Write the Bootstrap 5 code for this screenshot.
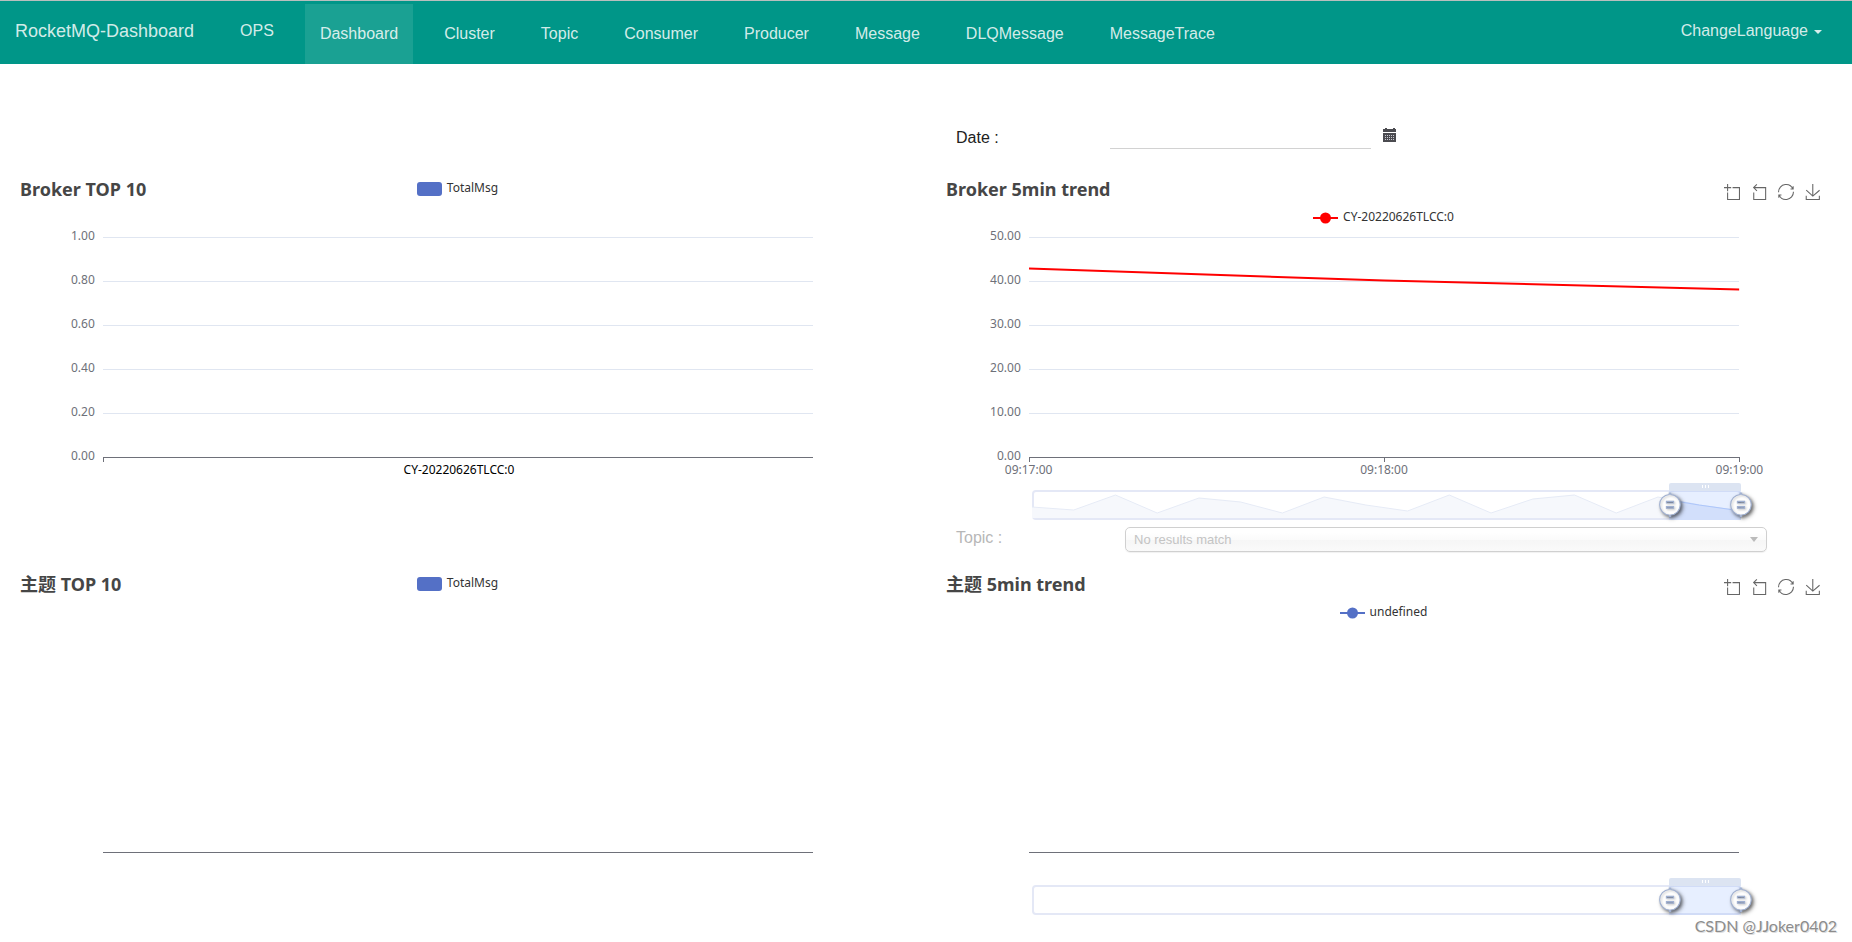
<!DOCTYPE html>
<html lang="en">
<head>
<meta charset="utf-8">
<meta name="viewport" content="width=device-width, initial-scale=1">
<title>RocketMQ-Dashboard</title>
<link href="https://cdn.jsdelivr.net/npm/bootstrap@5.3.0/dist/css/bootstrap.min.css" rel="stylesheet">
<style>
  body { font-family: "Liberation Sans", Arial, sans-serif; font-size: 16px; color: #212121; background: #fff; }
  a { text-decoration: none; }

  /* top bar */
  .topbar { background: #009688; border-top: 1px solid #b9bfbe; height: 64px; }
  .topbar a, .topbar button { color: rgba(255, 255, 255, .84); line-height: 24px; }
  .brand-link { font-size: 18px; padding: 0 15px 4px; }
  .menu { gap: 16px; margin: 0 0 0 16px; }
  .menu a { display: flex; align-items: center; height: 60px; padding: 0 15px; }
  .menu a.on { background: #1aa193; }
  .ops-link { padding-bottom: 7px !important; }
  .lang { background: none; border: 0; padding: 0 30px 4px 15px; }
  .lang::after { margin-left: 6px; border-width: 4px; border-bottom-width: 0; vertical-align: 2px; }

  /* form rows */
  .half { padding: 0 23px 0 15px; }
  .date-row { height: 113px; padding: 35px 0 0 15px; }
  .date-row label { width: 154px; }
  .topic-row { height: 45px; padding-left: 15px; color: #b7b7b7; }
  .topic-row label { width: 169px; line-height: 22px; }
  .date-input { width: 261px; height: 28px; border: 0; border-bottom: 1px solid #d2d2d2; background: none; padding: 0; margin-bottom: 6px; }
  .date-btn { border: 0; background: none; padding: 0; margin: 0 0 6px 12px; line-height: 0; }
  .pick { margin-right: 62px; position: relative; }
  .pick select { appearance: none; width: 100%; height: 25px; border: 1px solid #d0d0d0; border-radius: 5px; padding: 0 8px; font-size: 13px; color: #c4c4c4; opacity: 1; background: linear-gradient(#fff 20%, #fbfbfb 50%, #f6f6f6 52%, #fafafa); box-shadow: 0 1px 1px rgba(0, 0, 0, .06); }
  .pick::after { content: ""; position: absolute; right: 9px; top: 10px; border: 4px solid transparent; border-top: 5px solid #bbb; border-bottom: 0; }

  /* charts */
  .chart { height: 350px; font: 12px/16px "Noto Sans", "Noto Sans CJK SC", sans-serif; color: #333; }
  .chart-head { display: grid; grid-template-columns: 1fr auto 1fr; grid-template-rows: 28px 24px; height: 60px; padding: 0 8px 0 5px; }
  .chart-head h2 { font-size: 18px; line-height: 24px; font-weight: 700; color: #464646; margin: 0; }
  .legend { display: flex; gap: 5px; align-items: center; grid-column: 2; }
  .legend.top-line { height: 22px; }
  .legend.second { grid-row: 2; grid-column: 1 / 4; justify-self: center; }
  .legend svg { display: block; margin-top: 2px; }
  .tools { grid-column: 3; justify-self: end; display: flex; gap: 11px; padding-top: 7px; }
  .tools button { border: 0; background: none; padding: 0; width: 16px; height: 16px; line-height: 0; }
  .tools svg { width: 16px; height: 16px; fill: none; stroke: #666; stroke-width: 4; overflow: visible; }
  .plot { display: grid; grid-template-columns: calc(10% - 1px) 80%; height: 220px; }
  .ylab { display: flex; flex-direction: column; justify-content: space-between; text-align: right; height: 236px; margin-top: -9px; padding-right: 8px; color: #6e7079; }
  .area { grid-column: 2; width: 100%; height: 221px; overflow: visible; display: block; }
  .g { stroke: #e0e6f1; shape-rendering: crispEdges; }
  .ax { stroke: #6e7079; shape-rendering: crispEdges; }
  .xlab { height: 33px; margin: 0 10%; padding-top: 5px; display: flex; justify-content: space-between; color: #6e7079; }
  .xlab.wide { margin: 0 calc(10% - 23px) 0 calc(10% - 25px); }
  .xlab.single { justify-content: center; color: #000; }

  /* range slider below the trend charts */
  .zoomer { position: relative; height: 30px; margin: 0 calc(10% - 1px) 0 calc(10% + 2px); border: 2px solid #e4e8f6; border-radius: 4px; }
  .zoomer > svg { position: absolute; inset: -2px; width: calc(100% + 4px); height: 30px; }
  .window { position: absolute; left: 90%; right: -2px; top: -2px; height: 30px; background: rgba(135, 175, 255, .2); }
  .window::before { content: ""; position: absolute; left: 0; right: 0; top: -7px; height: 8px; border-radius: 2px 2px 0 0; background: #dce4f2; }
  .dots { position: absolute; left: calc(50% - 3px); top: -5px; width: 7px; height: 3px; background: repeating-linear-gradient(90deg, #fff 0 1px, transparent 1px 3px); }
  .grip { position: absolute; top: 2px; width: 24px; height: 26px; padding: 0; border: 0; background: none; line-height: 0; }
  .grip svg { width: 24px; height: 26px; overflow: visible; }
  .grip-fill { fill: #fff; filter: drop-shadow(2px 2px 2px rgba(0, 0, 0, .6)); }
  .grip-line { fill: none; stroke: #9fafd0; filter: drop-shadow(1px 1px 1px rgba(0, 0, 0, .25)); }
  .grip.from { left: -11px; }
  .grip.to { right: -12px; }

  .credit { position: absolute; right: 15px; bottom: 2px; font: 16px/20px Lato, sans-serif; color: #8c8c8c; text-shadow: -1px -1px 0 #fff, 1px 1px 0 #ddd; }
</style>
</head>
<body class="position-relative">
<svg width="0" height="0" class="position-absolute" aria-hidden="true">
  <defs>
    <path id="i-zoom" d="M0,13.5h26.9 M13.5,26.9V0 M32.1,13.5H58V58H13.5 V32.1"/>
    <path id="i-back" d="M22,1.4L9.9,13.5l12.3,12.3 M10.3,13.5H54.9v44.6 H10.3v-26"/>
    <path id="i-restore" d="M47,18.9h9.8V8.7 M56.3,20.1 C52.1,9,40.5,0.6,26.8,2.1C12.6,3.7,1.6,16.2,2.1,30.6 M13,41.1H3.1v10.2 M3.7,39.9c4.2,11.1,15.8,19.5,29.5,18 c14.2-1.6,25.2-14.1,24.7-28.5"/>
    <path id="i-save" d="M4.7,22.9L29.3,45.5L54.7,23.4M4.6,43.6L4.6,58L53.8,58L53.8,43.6M29.2,45.1L29.2,0"/>
    <path id="i-grip" d="M10.7,11.9v-1.3H9.3v1.3c-4.9,0.3-8.8,4.4-8.8,9.4c0,5,3.9,9.1,8.8,9.4v1.3h1.3v-1.3c4.9-0.3,8.8-4.4,8.8-9.4C19.5,16.3,15.6,12.2,10.7,11.9z M13.3,24.4H6.7V23h6.6V24.4z M13.3,19.6H6.7v-1.4h6.6V19.6z"/>
  </defs>
</svg>

<nav class="topbar d-flex align-items-center">
  <a class="brand-link" href="#">RocketMQ-Dashboard</a>
  <ul class="menu list-unstyled d-flex align-self-end">
    <li><a class="ops-link" href="#">OPS</a></li>
    <li><a class="on" href="#" aria-current="page">Dashboard</a></li>
    <li><a href="#">Cluster</a></li>
    <li><a href="#">Topic</a></li>
    <li><a href="#">Consumer</a></li>
    <li><a href="#">Producer</a></li>
    <li><a href="#">Message</a></li>
    <li><a href="#">DLQMessage</a></li>
    <li><a href="#">MessageTrace</a></li>
  </ul>
  <button class="lang dropdown-toggle ms-auto" type="button">ChangeLanguage</button>
</nav>

<main class="container-fluid p-0">
  <div class="row g-0">
    <div class="col-6 offset-6 half">
      <div class="date-row d-flex align-items-center">
        <label for="date">Date :</label>
        <input id="date" class="date-input" type="text">
        <button class="date-btn" type="button" aria-label="Pick a date">
          <svg width="14" height="14" viewBox="0 0 14 14" shape-rendering="crispEdges"><path fill="#4b4b50" d="M0 1h2V0h2v1h6V0h2v1h1v3H0zM0 5h13v9H0z"/><path stroke="#c9c9d2" stroke-dasharray="1 1" d="M2 7.500h10M2 9.500h10M2 11.500h10"/></svg>
        </button>
      </div>
    </div>
  </div>

  <div class="row g-0">
    <section class="col-6 half">
      <div class="chart">
        <div class="chart-head">
          <h2>Broker TOP 10</h2>
          <div class="legend top-line"><svg width="25" height="14"><rect width="25" height="14" rx="3" fill="#5470c6"/></svg>TotalMsg</div>
        </div>
        <div class="plot">
          <div class="ylab"><span>1.00</span><span>0.80</span><span>0.60</span><span>0.40</span><span>0.20</span><span>0.00</span></div>
          <svg class="area">
            <path class="ax" d="M.5 220v5"/>
            <line class="g" x2="100%" y1=".5" y2=".5"/><line class="g" x2="100%" y1="44.500" y2="44.500"/><line class="g" x2="100%" y1="88.500" y2="88.500"/><line class="g" x2="100%" y1="132.500" y2="132.500"/><line class="g" x2="100%" y1="176.500" y2="176.500"/>
            <line class="ax" x2="100%" y1="220.500" y2="220.500"/>
          </svg>
        </div>
        <div class="xlab single"><span>CY-20220626TLCC:0</span></div>
      </div>
    </section>
    <section class="col-6 half">
      <div class="chart">
        <div class="chart-head">
          <h2>Broker 5min trend</h2>
          <div class="tools">
            <button type="button" aria-label="Zoom"><svg viewBox="0 0 60 60"><use href="#i-zoom"/></svg></button>
            <button type="button" aria-label="Zoom reset"><svg viewBox="0 0 60 60"><use href="#i-back"/></svg></button>
            <button type="button" aria-label="Restore"><svg viewBox="0 0 60 60"><use href="#i-restore"/></svg></button>
            <button type="button" aria-label="Save as image"><svg viewBox="0 0 60 60"><use href="#i-save"/></svg></button>
          </div>
          <div class="legend second"><svg width="25" height="14"><path d="M0 7h25" stroke="red" stroke-width="2"/><circle cx="12.500" cy="7" r="5.500" fill="red"/></svg>CY-20220626TLCC:0</div>
        </div>
        <div class="plot">
          <div class="ylab"><span>50.00</span><span>40.00</span><span>30.00</span><span>20.00</span><span>10.00</span><span>0.00</span></div>
          <svg class="area">
            <line class="g" x2="100%" y1=".5" y2=".5"/><line class="g" x2="100%" y1="44.500" y2="44.500"/><line class="g" x2="100%" y1="88.500" y2="88.500"/><line class="g" x2="100%" y1="132.500" y2="132.500"/><line class="g" x2="100%" y1="176.500" y2="176.500"/>
            <line class="ax" x2="100%" y1="220.500" y2="220.500"/>
            <path class="ax" d="M.5 220v5"/><line class="ax" x1="50%" x2="50%" y1="220" y2="225"/><line class="ax" x1="100%" x2="100%" y1="220" y2="225"/>
            <svg width="100%" height="220" viewBox="0 0 2 220" preserveAspectRatio="none"><path d="M0 31.500L1 43.500L2 52.500" fill="none" stroke="red" stroke-width="2" vector-effect="non-scaling-stroke"/></svg>
          </svg>
        </div>
        <div class="xlab wide"><span>09:17:00</span><span>09:18:00</span><span>09:19:00</span></div>
        <div class="zoomer">
          <svg viewBox="0 0 17 30" preserveAspectRatio="none">
            <path fill="#f6f8fc" d="M0 17L1 20L2 5L3 23L4 8L5 12L6 23L7 7L8 15L9 21L10 5L11 23L12 9L13 5L14 23L15 7L16 15L17 21V28H0z"/>
            <path fill="none" stroke="#e6ebf6" vector-effect="non-scaling-stroke" d="M0 17L1 20L2 5L3 23L4 8L5 12L6 23L7 7L8 15L9 21L10 5L11 23L12 9L13 5L14 23L15 7L16 15L17 21"/>
          </svg>
          <div class="window">
            <svg class="d-block" width="100%" height="30" viewBox="0 0 70 30" preserveAspectRatio="none"><path fill="#d2dffb" d="M0 10L29 15L70 21V30H0z"/><path fill="none" stroke="#adc6fa" vector-effect="non-scaling-stroke" d="M0 10L29 15L70 21"/></svg>
            <span class="dots"></span>
            <button class="grip from" type="button" aria-label="Range start"><svg viewBox="-1 10 22 23"><use class="grip-fill" href="#i-grip"/><use class="grip-line" href="#i-grip"/></svg></button>
            <button class="grip to" type="button" aria-label="Range end"><svg viewBox="-1 10 22 23"><use class="grip-fill" href="#i-grip"/><use class="grip-line" href="#i-grip"/></svg></button>
          </div>
        </div>
      </div>
    </section>
  </div>

  <div class="row g-0">
    <div class="col-6 offset-6 half">
      <div class="topic-row d-flex align-items-start">
        <label for="topic">Topic :</label>
        <div class="pick flex-grow-1"><select id="topic" disabled><option>No results match</option></select></div>
      </div>
    </div>
  </div>

  <div class="row g-0">
    <section class="col-6 half">
      <div class="chart">
        <div class="chart-head">
          <h2>主题 TOP 10</h2>
          <div class="legend top-line"><svg width="25" height="14"><rect width="25" height="14" rx="3" fill="#5470c6"/></svg>TotalMsg</div>
        </div>
        <div class="plot">
          <svg class="area"><line class="ax" x2="100%" y1="220.500" y2="220.500"/></svg>
        </div>
      </div>
    </section>
    <section class="col-6 half">
      <div class="chart">
        <div class="chart-head">
          <h2>主题 5min trend</h2>
          <div class="tools">
            <button type="button" aria-label="Zoom"><svg viewBox="0 0 60 60"><use href="#i-zoom"/></svg></button>
            <button type="button" aria-label="Zoom reset"><svg viewBox="0 0 60 60"><use href="#i-back"/></svg></button>
            <button type="button" aria-label="Restore"><svg viewBox="0 0 60 60"><use href="#i-restore"/></svg></button>
            <button type="button" aria-label="Save as image"><svg viewBox="0 0 60 60"><use href="#i-save"/></svg></button>
          </div>
          <div class="legend second"><svg width="25" height="14"><path d="M0 7h25" stroke="#5470c6" stroke-width="2"/><circle cx="12.500" cy="7" r="5.500" fill="#5470c6"/></svg>undefined</div>
        </div>
        <div class="plot">
          <svg class="area"><line class="ax" x2="100%" y1="220.500" y2="220.500"/></svg>
        </div>
        <div class="xlab"></div>
        <div class="zoomer">
          <div class="window">
            <span class="dots"></span>
            <button class="grip from" type="button" aria-label="Range start"><svg viewBox="-1 10 22 23"><use class="grip-fill" href="#i-grip"/><use class="grip-line" href="#i-grip"/></svg></button>
            <button class="grip to" type="button" aria-label="Range end"><svg viewBox="-1 10 22 23"><use class="grip-fill" href="#i-grip"/><use class="grip-line" href="#i-grip"/></svg></button>
          </div>
        </div>
      </div>
    </section>
  </div>
  <div class="pb-3"></div>
</main>
<span class="credit">CSDN @JJoker0402</span>
<script src="https://cdn.jsdelivr.net/npm/bootstrap@5.3.0/dist/js/bootstrap.bundle.min.js"></script>
</body>
</html>
